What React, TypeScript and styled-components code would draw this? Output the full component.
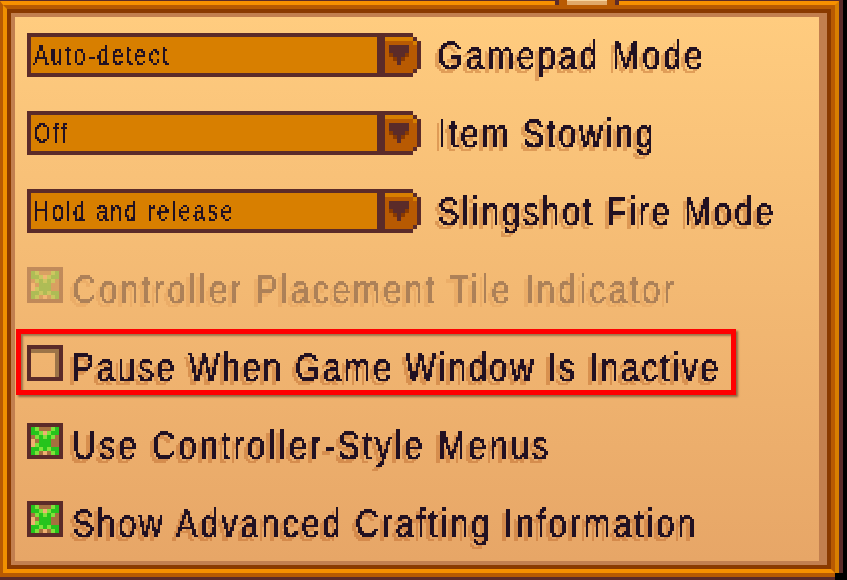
import React from "react";
import styled, { createGlobalStyle } from "styled-components";

const GlobalStyle = createGlobalStyle`
  html, body {
    margin: 0;
    background: #000;
    overflow: hidden;
  }
`;

const Screen = styled.div`
  position: relative;
  width: 847px;
  height: 580px;
  box-sizing: border-box;
  padding-right: 4px;
  font-family: "Liberation Sans", Arial, sans-serif;
`;

const FrameOuter = styled.div`
  height: 100%;
  box-sizing: border-box;
  border-style: solid;
  border-color: #5b2b29;
  border-width: 1px 4px 3px 0;
`;

const FrameMid = styled.div`
  height: 100%;
  box-sizing: border-box;
  border-style: solid;
  border-color: #f79000 #d87f00 #b85a02 #b85a02;
  border-width: 4px 4px 4px 3px;
`;

const FrameInner = styled.div`
  height: 100%;
  box-sizing: border-box;
  border-style: solid;
  border-color: #b85a02 #b85a02 #f79000 #f09000;
  border-width: 4px;
`;

const FrameDark = styled.div`
  height: 100%;
  box-sizing: border-box;
  border: 4px solid #8a3a00;
`;

const Panel = styled.div`
  height: 100%;
  box-sizing: border-box;
  border-style: solid;
  border-color: #c27f4f;
  border-width: 4px 8px 4px 4px;
  padding: 16px 12px;
  display: flex;
  flex-direction: column;
  gap: 34px;
  background: linear-gradient(#ffcc7f, #e7a667);
`;

const Tab = styled.div`
  position: absolute;
  left: 555px;
  top: 0;
  width: 64px;
  height: 5px;
  box-sizing: border-box;
  border-style: solid;
  border-color: #5b2b29;
  border-width: 0 4px;
  padding: 0 8px;
  background: #b85a02;
`;

const TabFace = styled.div`
  height: 100%;
  background: #e0a868;
  border-top: 1px solid #f7d6a0;
  box-sizing: border-box;
`;

const CornerCut = styled.div`
  position: absolute;
  left: 835px;
  top: 573px;
  width: 12px;
  height: 7px;
  background: #000;
`;

const Row = styled.div<{ $disabled?: boolean }>`
  position: relative;
  display: flex;
  align-items: flex-start;
  height: 44px;
  opacity: ${(p) => (p.$disabled ? 0.33 : 1)};
`;

const Highlight = styled.div`
  position: absolute;
  left: -11px;
  top: -16px;
  width: 720px;
  height: 66px;
  box-sizing: border-box;
  border: 5px solid #ff0000;
  box-shadow: 2px 2px 2px rgba(60, 40, 30, 0.55), inset 2px 2px 2px rgba(60, 40, 30, 0.45);
`;

const Select = styled.div`
  display: flex;
  width: 394px;
  height: 44px;
  flex-shrink: 0;
`;

const SelectField = styled.div`
  flex: 1;
  box-sizing: border-box;
  border-style: solid;
  border-color: #5b2b29;
  border-width: 4px 8px 4px 4px;
  padding-left: 2px;
  background: #d87f00;
  color: #221122;
  font-size: 27px;
  line-height: 36px;
  white-space: nowrap;
`;

const FieldText = styled.div`
  height: 36px;
  filter: url(#pixel-small);
`;

const FieldInk = styled.span`
  display: inline-block;
  transform: scaleX(0.82);
  transform-origin: left center;
  letter-spacing: 2.6px;
  -webkit-text-stroke: 0.3px #221122;
`;

const Label = styled.div<{ $gap: number }>`
  height: 60px;
  width: 800px;
  margin-left: ${(p) => p.$gap}px;
  font-size: 40px;
  line-height: 45px;
  color: #221122;
  white-space: nowrap;
  filter: url(#pixel-label);
`;

const LabelInk = styled.span<{ $spacing: number }>`
  display: inline-block;
  transform: scaleX(0.82);
  transform-origin: left center;
  letter-spacing: ${(p) => p.$spacing}px;
  -webkit-text-stroke: 0.5px #221122;
`;

const PixelSvg = styled.svg`
  display: block;
  flex-shrink: 0;
  shape-rendering: crispEdges;
`;

const HiddenSvg = styled.svg`
  position: absolute;
  width: 0;
  height: 0;
`;

// snaps text to a 2px grid, the label version also drops the offset shadow
const PixelFilters = () => (
  <HiddenSvg>
    <filter id="pixel-label" filterUnits="userSpaceOnUse" x="-8" y="0" width="820" height="60" colorInterpolationFilters="sRGB">
      <feFlood x="-8" y="0" width="1" height="1" floodColor="#000" />
      <feComposite x="-8" y="0" width="2" height="2" />
      <feTile result="grid" />
      <feComposite in="SourceAlpha" in2="grid" operator="in" />
      <feComponentTransfer result="m">
        <feFuncA type="discrete" tableValues="0 1" />
      </feComponentTransfer>
      <feOffset in="m" dx="1" result="m2" />
      <feMerge result="w">
        <feMergeNode in="m" />
        <feMergeNode in="m2" />
      </feMerge>
      <feOffset in="w" dy="1" result="w2" />
      <feMerge result="mask">
        <feMergeNode in="w" />
        <feMergeNode in="w2" />
      </feMerge>
      <feFlood floodColor="#221122" />
      <feComposite in2="mask" operator="in" result="ink" />
      <feOffset in="mask" dx="-4" dy="4" result="smask" />
      <feFlood floodColor="#b45a1e" floodOpacity="0.38" />
      <feComposite in2="smask" operator="in" result="shade" />
      <feMerge>
        <feMergeNode in="shade" />
        <feMergeNode in="ink" />
      </feMerge>
    </filter>
    <filter id="pixel-small" filterUnits="userSpaceOnUse" x="0" y="0" width="340" height="36" colorInterpolationFilters="sRGB">
      <feFlood x="0" y="0" width="1" height="1" floodColor="#000" />
      <feComposite x="0" y="0" width="2" height="2" />
      <feTile result="grid" />
      <feComposite in="SourceAlpha" in2="grid" operator="in" />
      <feComponentTransfer result="m">
        <feFuncA type="discrete" tableValues="0 1" />
      </feComponentTransfer>
      <feOffset in="m" dx="1" result="m2" />
      <feMerge result="w">
        <feMergeNode in="m" />
        <feMergeNode in="m2" />
      </feMerge>
      <feOffset in="w" dy="1" result="w2" />
      <feMerge result="mask">
        <feMergeNode in="w" />
        <feMergeNode in="w2" />
      </feMerge>
      <feFlood floodColor="#221122" />
      <feComposite in2="mask" operator="in" />
    </filter>
  </HiddenSvg>
);

const ArrowButton = () => (
  <PixelSvg width="36" height="44" viewBox="0 0 36 44">
    <rect x="0" y="0" width="28" height="4" fill="#5b2b29" />
    <rect x="0" y="40" width="28" height="4" fill="#5b2b29" />
    <rect x="28" y="4" width="4" height="4" fill="#5b2b29" />
    <rect x="28" y="36" width="4" height="4" fill="#5b2b29" />
    <rect x="32" y="8" width="4" height="28" fill="#5b2b29" />
    <rect x="0" y="4" width="28" height="36" fill="#b85a02" />
    <rect x="28" y="8" width="4" height="28" fill="#b85a02" />
    <rect x="0" y="4" width="28" height="4" fill="#d87f00" />
    <rect x="28" y="8" width="4" height="4" fill="#d87f00" />
    <rect x="4" y="20" width="4" height="4" fill="#8a3a00" />
    <rect x="20" y="20" width="4" height="4" fill="#8a3a00" />
    <rect x="8" y="24" width="4" height="4" fill="#8a3a00" />
    <rect x="16" y="24" width="4" height="4" fill="#8a3a00" />
    <rect x="4" y="12" width="20" height="8" fill="#5b2b29" />
    <rect x="8" y="20" width="12" height="4" fill="#5b2b29" />
    <rect x="12" y="24" width="4" height="8" fill="#5b2b29" />
  </PixelSvg>
);

const CHECK_COLORS: Record<string, string> = {
  G: "#25c41c",
  L: "#7fe23a",
  B: "#a5703f",
  T: "#f0b070",
};

const CHECK_PIXELS = [
  "GLBBBLG",
  "GGLTLGG",
  "BLGLGLB",
  "TBGGGBB",
  "TLGGGBB",
  "GGLGLGG",
  "GLBTBLG",
];

const CheckBox = ({ checked }: { checked: boolean }) => (
  <PixelSvg width="36" height="36" viewBox="0 0 36 36">
    <rect x="2" y="2" width="32" height="32" fill="none" stroke="#5b2b29" strokeWidth="4" />
    {checked ? (
      CHECK_PIXELS.map((line, y) =>
        line.split("").map((c, x) => (
          <rect key={`${x}-${y}`} x={4 + x * 4} y={4 + y * 4} width="4" height="4" fill={CHECK_COLORS[c]} />
        ))
      )
    ) : (
      <>
        <rect x="4" y="4" width="28" height="4" fill="#9c7448" />
        <rect x="28" y="4" width="4" height="28" fill="#9c7448" />
      </>
    )}
  </PixelSvg>
);

const selects = [
  { value: "Auto-detect", label: "Gamepad Mode", spacing: 3.3 },
  { value: "Off", label: "Item Stowing", spacing: 2.95 },
  { value: "Hold and release", label: "Slingshot Fire Mode", spacing: 3.0 },
];

const checks = [
  { label: "Controller Placement Tile Indicator", checked: true, disabled: true, spacing: 3.6 },
  { label: "Pause When Game Window Is Inactive", checked: false, highlight: true, spacing: 2.85 },
  { label: "Use Controller-Style Menus", checked: true, spacing: 3.65 },
  { label: "Show Advanced Crafting Information", checked: true, spacing: 3.35 },
];

export default function App() {
  return (
    <Screen>
      <GlobalStyle />
      <PixelFilters />
      <FrameOuter>
        <FrameMid>
          <FrameInner>
            <FrameDark>
              <Panel>
                {selects.map((s) => (
                  <Row key={s.label}>
                    <Select>
                      <SelectField>
                        <FieldText>
                          <FieldInk>{s.value}</FieldInk>
                        </FieldText>
                      </SelectField>
                      <ArrowButton />
                    </Select>
                    <Label $gap={16}>
                      <LabelInk $spacing={s.spacing}>{s.label}</LabelInk>
                    </Label>
                  </Row>
                ))}
                {checks.map((c) => (
                  <Row key={c.label} $disabled={c.disabled}>
                    <CheckBox checked={c.checked} />
                    <Label $gap={9}>
                      <LabelInk $spacing={c.spacing}>{c.label}</LabelInk>
                    </Label>
                    {c.highlight && <Highlight />}
                  </Row>
                ))}
              </Panel>
            </FrameDark>
          </FrameInner>
        </FrameMid>
      </FrameOuter>
      <Tab>
        <TabFace />
      </Tab>
      <CornerCut />
    </Screen>
  );
}
